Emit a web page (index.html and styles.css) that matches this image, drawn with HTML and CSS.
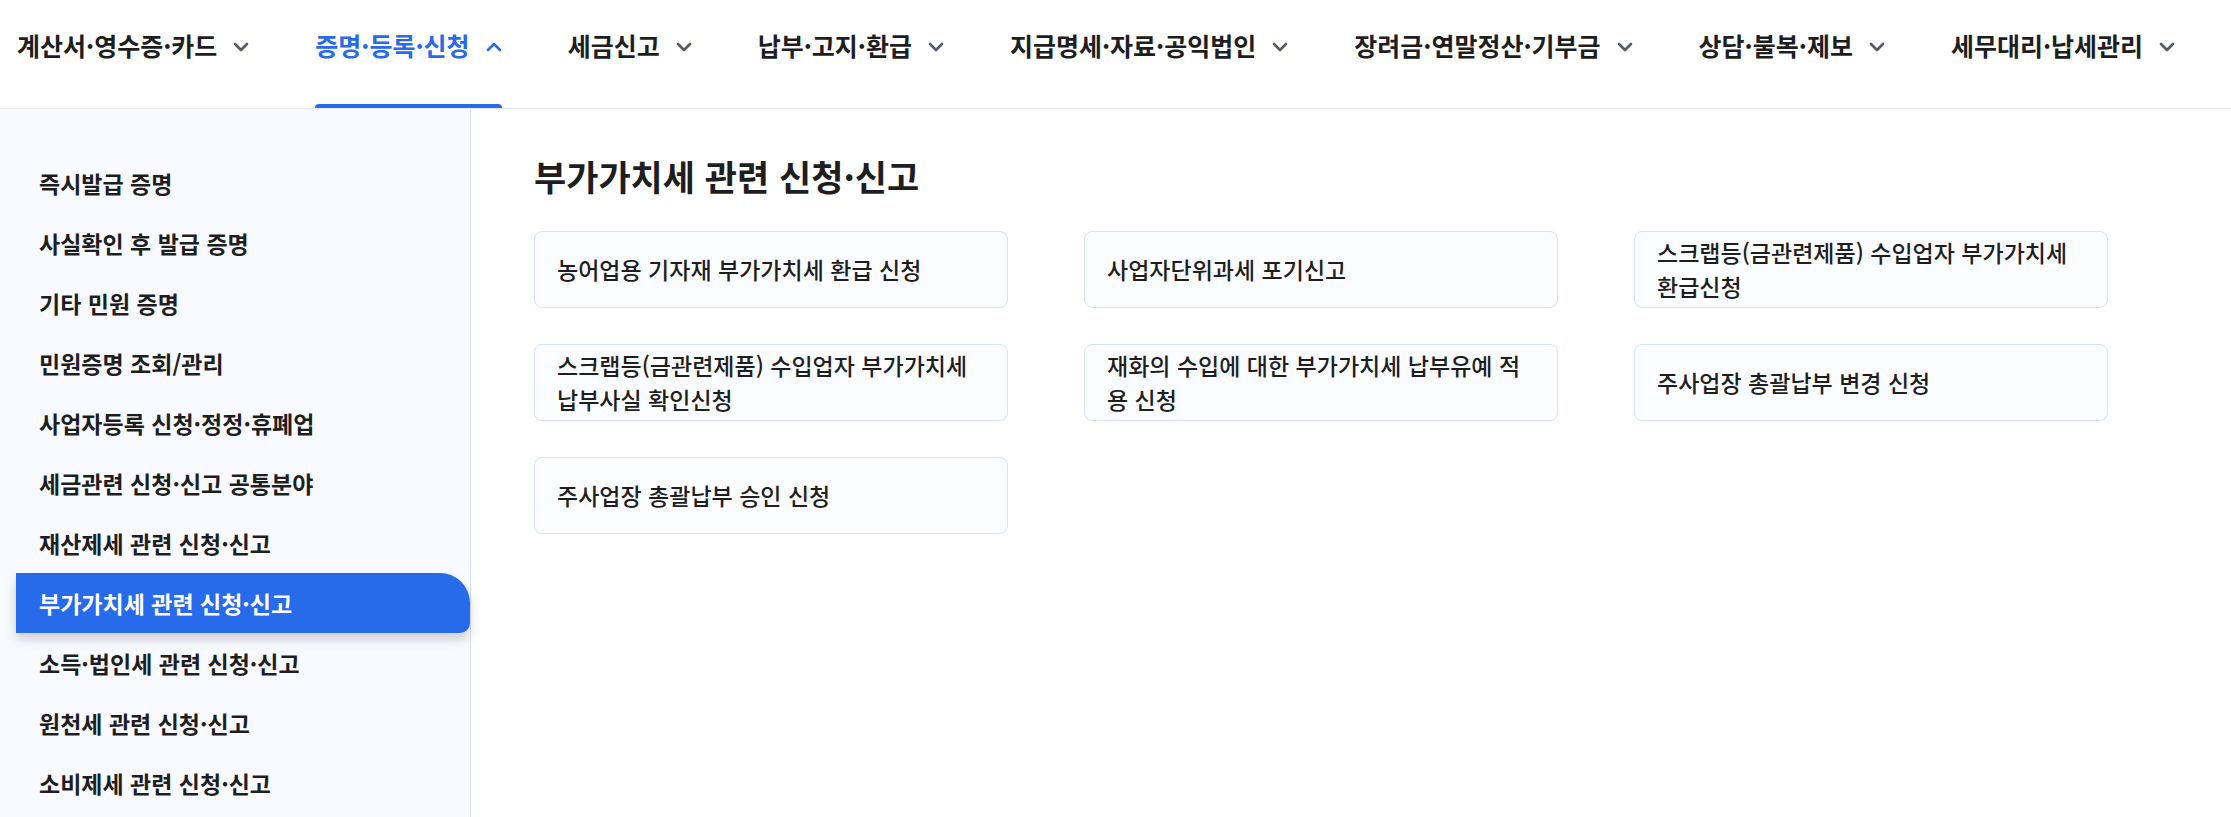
FILE: index.html
```html
<!DOCTYPE html>
<html lang="ko">
<head>
    <meta charset="UTF-8">
    <meta name="viewport" content="width=device-width, initial-scale=1.0">
    <title>증명·등록·신청 - 부가가치세 관련 신청·신고</title>
    <link rel="stylesheet" href="styles.css">
</head>
<body>
    <header id="header">
        <ul class="gnb">
            <li class="gnb-item"><a href="#">계산서·영수증·카드<svg class="chev" viewBox="0 0 16 10"><path d="M2 2 L8 8 L14 2"/></svg></a></li>
            <li class="gnb-item active"><a href="#">증명·등록·신청<svg class="chev" viewBox="0 0 16 10"><path d="M2 8 L8 2 L14 8"/></svg></a></li>
            <li class="gnb-item"><a href="#">세금신고<svg class="chev" viewBox="0 0 16 10"><path d="M2 2 L8 8 L14 2"/></svg></a></li>
            <li class="gnb-item"><a href="#">납부·고지·환급<svg class="chev" viewBox="0 0 16 10"><path d="M2 2 L8 8 L14 2"/></svg></a></li>
            <li class="gnb-item"><a href="#">지급명세·자료·공익법인<svg class="chev" viewBox="0 0 16 10"><path d="M2 2 L8 8 L14 2"/></svg></a></li>
            <li class="gnb-item"><a href="#">장려금·연말정산·기부금<svg class="chev" viewBox="0 0 16 10"><path d="M2 2 L8 8 L14 2"/></svg></a></li>
            <li class="gnb-item"><a href="#">상담·불복·제보<svg class="chev" viewBox="0 0 16 10"><path d="M2 2 L8 8 L14 2"/></svg></a></li>
            <li class="gnb-item"><a href="#">세무대리·납세관리<svg class="chev" viewBox="0 0 16 10"><path d="M2 2 L8 8 L14 2"/></svg></a></li>
        </ul>
    </header>

    <div id="container">
        <nav class="lnb">
            <ul>
                <li><a href="#">즉시발급 증명</a></li>
                <li><a href="#">사실확인 후 발급 증명</a></li>
                <li><a href="#">기타 민원 증명</a></li>
                <li><a href="#">민원증명 조회/관리</a></li>
                <li><a href="#">사업자등록 신청·정정·휴폐업</a></li>
                <li><a href="#">세금관련 신청·신고 공통분야</a></li>
                <li><a href="#">재산제세 관련 신청·신고</a></li>
                <li class="on"><a href="#">부가가치세 관련 신청·신고</a></li>
                <li><a href="#">소득·법인세 관련 신청·신고</a></li>
                <li><a href="#">원천세 관련 신청·신고</a></li>
                <li><a href="#">소비제세 관련 신청·신고</a></li>
            </ul>
        </nav>

        <main class="content">
            <h2 class="sub-title">부가가치세 관련 신청·신고</h2>
            <ul class="menu-grid">
                <li><a href="#">농어업용 기자재 부가가치세 환급 신청</a></li>
                <li><a href="#">사업자단위과세 포기신고</a></li>
                <li><a href="#">스크랩등(금관련제품) 수입업자 부가가치세<br>환급신청</a></li>
                <li><a href="#">스크랩등(금관련제품) 수입업자 부가가치세<br>납부사실 확인신청</a></li>
                <li><a href="#">재화의 수입에 대한 부가가치세 납부유예 적<br>용 신청</a></li>
                <li><a href="#">주사업장 총괄납부 변경 신청</a></li>
                <li><a href="#">주사업장 총괄납부 승인 신청</a></li>
            </ul>
        </main>
    </div>
</body>
</html>
```

FILE: styles.css
```css
html, body {
    height: 100%;
}
body {
    margin: 0;
    overflow: hidden;
    font-family: "Noto Sans CJK KR", "Noto Sans", sans-serif;
    color: #1e1e1e;
    background: #fff;
}
a {
    color: inherit;
    text-decoration: none;
}
ul {
    list-style: none;
    margin: 0;
    padding: 0;
}

/* top menu */
#header {
    border-bottom: 1px solid #e6e8ec;
}
.gnb {
    display: flex;
    gap: 66px;
    padding-left: 17px;
    height: 108px;
}
.gnb-item {
    position: relative;
}
.gnb-item a {
    display: flex;
    align-items: center;
    gap: 16px;
    height: 90px;
    font-size: 25px;
    font-weight: 700;
    white-space: nowrap;
}
.chev {
    width: 16px;
    height: 10px;
    margin-top: 3px;
    fill: none;
    stroke: #555966;
    stroke-width: 2.6;
    stroke-linecap: round;
    stroke-linejoin: round;
}
.gnb-item.active a {
    color: #276bea;
}
.gnb-item.active .chev {
    stroke: #276bea;
}
.gnb-item.active::after {
    content: "";
    position: absolute;
    left: 0;
    right: 0;
    bottom: 0;
    height: 4px;
    border-radius: 4px 4px 0 0;
    background: #276bea;
}

/* body */
#container {
    display: flex;
    height: calc(100% - 109px);
}
.lnb {
    width: 454px;
    flex-shrink: 0;
    padding: 44px 0 0 16px;
    background: #f8faff;
    border-right: 1px solid #d6e2fb;
}
.lnb li a {
    display: flex;
    align-items: center;
    height: 60px;
    padding-left: 23px;
    font-size: 23px;
    font-weight: 600;
}
.lnb li.on a {
    background: #276bea;
    color: #fff;
    border-radius: 0 30px 10px 0;
    box-shadow: 0 6px 12px rgba(0, 0, 0, 0.18);
}

.content {
    flex: 1;
    padding: 44px 0 0 63px;
}
.sub-title {
    margin: 0 0 32px;
    font-size: 35px;
    line-height: 46px;
    font-weight: 700;
    color: #1e1e1e;
}
.menu-grid {
    display: grid;
    grid-template-columns: repeat(3, 474px);
    column-gap: 76px;
    row-gap: 36px;
}
.menu-grid a {
    display: flex;
    align-items: center;
    height: 77px;
    box-sizing: border-box;
    padding: 0 22px;
    background: #fbfcff;
    border: 1px solid #d6e3fa;
    border-radius: 8px;
    font-size: 23px;
    line-height: 1.45;
    font-weight: 500;
}
```
